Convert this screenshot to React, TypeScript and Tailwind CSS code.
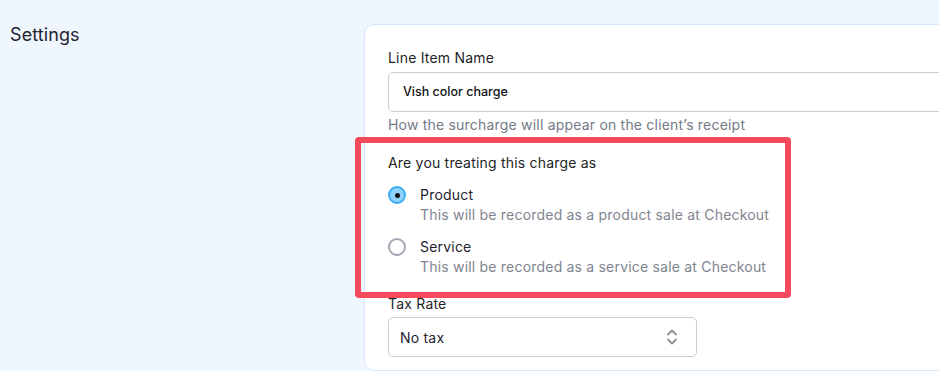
import React from "react";

export default function App() {
  return (
    <div
      className="relative w-[939px] h-[371px] overflow-hidden bg-[#eff6fe] flex"
      style={{ fontFamily: "Inter, 'Noto Sans', sans-serif" }}
    >
      <div className="w-[364px] shrink-0 pl-[10px] pt-[23px]">
        <h2 className="text-[18px] leading-[24px] tracking-[0.1px] text-[#1f2430]">Settings</h2>
      </div>
      <div className="mt-[24px] w-[700px] shrink-0 rounded-[10px] border border-[#d6e6fb] bg-white px-[23px] pt-[23px] tracking-[0.2px]">
        <label className="block text-[14px] leading-[20px] text-[#1c1f26]">Line Item Name</label>
        <div className="mt-[4px] h-[40px] w-[650px] rounded-[5px] border border-[#c9ccd3] flex items-center px-[14px] text-[12.5px] tracking-normal font-medium text-[#111318]">
          Vish color charge
        </div>
        <p className="mt-[3px] text-[14px] leading-[20px] text-[#737a88]">
          How the surcharge will appear on the client’s receipt
        </p>

        <p className="mt-[18px] text-[14px] leading-[20px] text-[#1c1f26]">Are you treating this charge as</p>

        <div className="mt-[12px] flex gap-[14px]">
          <div className="mt-[1px] h-[18px] w-[18px] rounded-full border-2 border-[#38aef5] bg-[#8fd3fb] flex items-center justify-center">
            <div className="h-[5px] w-[5px] rounded-full bg-[#111]" />
          </div>
          <div>
            <div className="text-[14px] leading-[20px] text-[#1f2430]">Product</div>
            <div className="text-[14px] leading-[20px] text-[#80858f]">
              This will be recorded as a product sale at Checkout
            </div>
          </div>
        </div>

        <div className="mt-[12px] flex gap-[14px]">
          <div className="mt-[1px] h-[18px] w-[18px] rounded-full border-2 border-[#a3a8b2] bg-white" />
          <div>
            <div className="text-[14px] leading-[20px] text-[#1f2430]">Service</div>
            <div className="text-[14px] leading-[20px] text-[#80858f]">
              This will be recorded as a service sale at Checkout
            </div>
          </div>
        </div>

        <label className="mt-[17px] block text-[14px] leading-[20px] text-[#1c1f26]">Tax Rate</label>
        <div className="mt-[3px] h-[40px] w-[309px] rounded-[5px] border border-[#c9ccd3] flex items-center justify-between pl-[11px] pr-[18px] text-[14px] text-[#1f2430]">
          <span>No tax</span>
          <svg width="12" height="18" viewBox="0 0 12 18" fill="none" stroke="#8a8f99" strokeWidth="1.8" strokeLinecap="round" strokeLinejoin="round">
            <path d="M2 6.5 6 2.5 10 6.5" />
            <path d="M2 11.5 6 15.5 10 11.5" />
          </svg>
        </div>
      </div>

      <div className="absolute left-[355px] top-[137px] h-[161px] w-[436px] rounded-[4px] border-[6px] border-[#f44a5b]" />
    </div>
  );
}
